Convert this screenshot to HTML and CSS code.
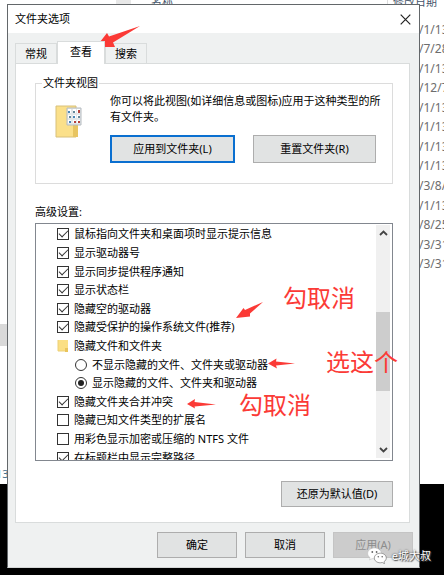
FILE: index.html
```html
<!DOCTYPE html>
<html lang="zh-CN">
<head>
    <meta charset="UTF-8">
    <meta name="viewport" content="width=device-width, initial-scale=1.0">
    <title>文件夹选项</title>
    <link rel="stylesheet" href="styles.css">
</head>
<body>
    <div class="backdrop">
        <div class="explorer">
            <div class="nav-pane">
                <div class="nav-selected"></div>
                <div class="nav-text">13</div>
            </div>
            <div class="file-pane">
                <div class="column-check"></div>
                <div class="column-title">名称</div>
            </div>
            <div class="date-pane">
                <div class="column-title">修改日期</div>
                <div class="dates">
                    <div>/1/13</div>
                    <div>/7/28</div>
                    <div>/1/13</div>
                    <div>/12/7</div>
                    <div>/1/13</div>
                    <div>/1/13</div>
                    <div>/1/13</div>
                    <div>/1/13</div>
                    <div>/3/8/</div>
                    <div>/1/13</div>
                    <div>/8/25</div>
                    <div>/3/31</div>
                    <div>/3/31</div>
                </div>
            </div>
        </div>
        <div class="desktop"></div>
    </div>

    <main class="dialog">
        <header class="titlebar">
            <h1>文件夹选项</h1>
            <button class="close" aria-label="关闭">
                <svg width="11" height="11" viewBox="0 0 11 11"><path d="M.7.7l9.6 9.6M10.3.7L.7 10.3" stroke="#222" stroke-width="1.2" fill="none"/></svg>
            </button>
        </header>
        <div class="content">
            <div class="tabs" role="tablist">
                <button class="tab" role="tab">常规</button>
                <button class="tab active" role="tab" aria-selected="true">查看</button>
                <button class="tab" role="tab">搜索</button>
            </div>
            <div class="panel">
                <fieldset class="views">
                    <legend>文件夹视图</legend>
                    <svg class="views-icon" width="27" height="34" viewBox="0 0 27 34">
                        <path d="M1 1h20v31H1z" fill="#fbe08a" stroke="#d8c07a"/>
                        <path d="M18 20l5-1v13h-5z" fill="#e8c562"/>
                        <path d="M12 3h14v17H12z" fill="#e4e8ea" stroke="#b5bbc0"/>
                        <path d="M13 4h3v4h-3zM18 4h3v4h-3zM22 4h3v4h-3zM13 10h3v3h-3zM18 10h3v3h-3zM22 10h3v3h-3zM13 15h3v3h-3zM18 15h3v3h-3zM22 15h3v3h-3z" fill="#fff"/>
                        <path d="M13 6h2v2h-2zM18 11h2v2h-2zM14 16h2v2h-2z" fill="#4b87b8"/>
                        <path d="M23 5h2v3h-2zM19 16h2v2h-2zM23 16h2v2h-2z" fill="#b5423c"/>
                        <path d="M18 6h2v2h-2zM14 11h2v2h-2zM23 11h2v2h-2z" fill="#66899a"/>
                    </svg>
                    <div class="views-body">
                        <p>你可以将此视图(如详细信息或图标)应用于这种类型的所有文件夹。</p>
                        <div class="views-buttons">
                            <button class="btn focused">应用到文件夹(L)</button>
                            <button class="btn">重置文件夹(R)</button>
                        </div>
                    </div>
                </fieldset>

                <h2>高级设置:</h2>
                <div class="settings">
                    <ul class="options">
                        <li><label><input type="checkbox" checked>鼠标指向文件夹和桌面项时显示提示信息</label></li>
                        <li><label><input type="checkbox" checked>显示驱动器号</label></li>
                        <li><label><input type="checkbox" checked>显示同步提供程序通知</label></li>
                        <li><label><input type="checkbox" checked>显示状态栏</label></li>
                        <li><label><input type="checkbox" checked>隐藏空的驱动器</label></li>
                        <li><label><input type="checkbox" checked>隐藏受保护的操作系统文件(推荐)</label></li>
                        <li class="group">
                            <svg width="12" height="14" viewBox="0 0 12 14"><path d="M1 1h10v11H1z" fill="#fbdf83"/><path d="M8 9h3v4H8z" fill="#e9c45c"/><path d="M1 1v11h7" fill="none" stroke="#ecd078"/></svg>
                            隐藏文件和文件夹
                        </li>
                        <li class="nested"><label><input type="radio" name="hidden">不显示隐藏的文件、文件夹或驱动器</label></li>
                        <li class="nested"><label><input type="radio" name="hidden" checked>显示隐藏的文件、文件夹和驱动器</label></li>
                        <li><label><input type="checkbox" checked>隐藏文件夹合并冲突</label></li>
                        <li><label><input type="checkbox">隐藏已知文件类型的扩展名</label></li>
                        <li><label><input type="checkbox">用彩色显示加密或压缩的 NTFS 文件</label></li>
                        <li><label><input type="checkbox" checked>在标题栏中显示完整路径</label></li>
                    </ul>
                    <div class="scrollbar">
                        <svg width="9" height="6" viewBox="0 0 9 6"><path d="M1 5l3.500-3.500L8 5" stroke="#444" stroke-width="1.8" fill="none"/></svg>
                        <div class="track"><div class="thumb"></div></div>
                        <svg width="9" height="6" viewBox="0 0 9 6"><path d="M1 1l3.500 3.500L8 1" stroke="#444" stroke-width="1.8" fill="none"/></svg>
                    </div>
                </div>
                <button class="btn restore">还原为默认值(D)</button>
            </div>
        </div>
        <footer class="actions">
            <button class="btn">确定</button>
            <button class="btn">取消</button>
            <button class="btn" disabled>应用(A)</button>
        </footer>
    </main>

    <!-- red marks drawn over the dialog -->
    <svg class="arrows" width="444" height="575" viewBox="0 0 444 575">
        <path d="M96 47L107 33l2 3.500L140 26l-27 16.500 2 4.500z"/>
        <path d="M236 318l7.500-10 1.500 2 18-8-13 11.500v3z"/>
        <path d="M268 363.500l8.500-5-.5 3 19 2-19 2 1 3z"/>
        <path d="M187 404l8-5-.5 3 21.500 2.500-21.500 2 .5 2z"/>
    </svg>
    <div class="note note-protected">勾取消</div>
    <div class="note note-hidden">选这个</div>
    <div class="note note-merge">勾取消</div>

    <div class="watermark">
        <svg width="20" height="17" viewBox="0 0 20 17">
            <path d="M7.500 1C3.600 1 .7 3.400.7 6.500c0 1.700.9 3.200 2.400 4.200L2.500 13l2.600-1.400c.8.2 1.500.3 2.400.3 3.900 0 6.900-2.400 6.900-5.400S11.400 1 7.500 1z" fill="#fff" stroke="#bbb" stroke-width=".5"/>
            <path d="M13.300 6.200c-3.400 0-6 2.100-6 4.800s2.600 4.800 6 4.800c.7 0 1.400-.1 2-.3l2.200 1.200-.5-2c1.400-.9 2.300-2.200 2.300-3.700 0-2.700-2.600-4.800-6-4.800z" fill="#fff" stroke="#777" stroke-width=".7"/>
            <g fill="#666"><circle cx="5.300" cy="5" r=".9"/><circle cx="9.600" cy="5" r=".9"/><circle cx="11.300" cy="9.700" r=".8"/><circle cx="15.200" cy="9.700" r=".8"/></g>
        </svg>
        <span>e城大叔</span>
    </div>
</body>
</html>
```
FILE: styles.css
```css
* {
    box-sizing: border-box;
}
body {
    position: relative;
    min-height: 100vh;
    margin: 0;
    padding: 4px 24px 7px 7px;
    overflow: hidden;
    font-family: "Noto Sans", "Noto Sans CJK SC", sans-serif;
    font-size: 11px;
    line-height: 16px;
    color: #000;
}
h1, h2, p, ul {
    margin: 0;
    padding: 0;
    font-size: 11px;
    font-weight: 400;
}
button {
    font: inherit;
    color: inherit;
}

/* window behind the dialog */
.backdrop {
    position: absolute;
    inset: 0;
    display: flex;
    flex-direction: column;
}
.explorer {
    flex: 1;
    display: flex;
    background: #fff;
}
.desktop {
    height: 91px;
    background: #000;
}
.nav-pane {
    width: 116px;
    padding-top: 324px;
}
.nav-selected {
    height: 22px;
    background: #d9d9d9;
}
.nav-text {
    margin-top: 120px;
    margin-left: -4px;
    color: #46708c;
}
.file-pane {
    flex: 1;
    display: flex;
    gap: 20px;
}
.column-check {
    width: 15px;
    height: 6px;
    background: #e8e8e8;
}
.column-title {
    height: 20px;
    margin-top: -6px;
    color: #44546a;
}
.date-pane {
    width: 57px;
    padding-left: 5px;
    border-left: 1px solid #ddd;
    overflow: hidden;
}
.dates {
    display: flex;
    flex-direction: column;
    height: 254px;
    margin-top: 6px;
    padding-left: 26px;
    font-size: 12px;
    color: #6d6d6d;
}
.dates div {
    flex: 1;
    display: flex;
    align-items: center;
}

.dialog {
    position: relative;
    display: flex;
    flex-direction: column;
    border: 1px solid #63676a;
    border-bottom-color: #d5d7d7;
    background: #eff1f1;
}
.titlebar {
    display: flex;
    align-items: center;
    justify-content: space-between;
    height: 28px;
    padding: 0 8px 0 7px;
    background: #fff;
}
.close {
    display: flex;
    padding: 0;
    border: 0;
    background: none;
}

.content {
    padding: 8px 9px 0 7px;
}
.tabs {
    display: flex;
    align-items: flex-end;
}
.tab {
    width: 42px;
    height: 20px;
    padding: 0;
    border: 1px solid #d9dcdc;
    border-bottom: 0;
    border-radius: 0;
    background: #eff1f1;
}
.tab.active {
    width: 48px;
    height: 23px;
    margin-bottom: -1px;
    padding-bottom: 2px;
    background: #fff;
    z-index: 1;
}
.panel {
    display: flex;
    flex-direction: column;
    padding: 11px 16px 15px 19px;
    border: 1px solid #d9dcdc;
    background: #fff;
}

.views {
    display: flex;
    align-items: flex-start;
    gap: 28px;
    min-width: 0;
    margin: 0;
    padding: 2px 16px 20px 19px;
    border: 1px solid #dcdcdc;
}
.views legend {
    margin-left: -13px;
    padding: 0 1px;
}
.views-icon {
    flex: none;
    margin-top: 12px;
}
.views-body {
    flex: 1;
}
.views-body p {
    margin-right: -10px;
}
.views-buttons {
    display: flex;
    gap: 18px;
    margin-top: 10px;
}
.views-buttons .btn {
    flex: 1;
    height: 28px;
}
.btn {
    height: 26px;
    padding: 0;
    border: 1px solid #adadad;
    background: #e1e3e3;
}
.btn.focused {
    border: 2px solid #0a6fd0;
}
.btn:disabled {
    border-color: #c4c4c4;
    background: #cccccc;
    color: #8c8c8c;
}

h2 {
    margin-top: 20px;
}
.settings {
    display: flex;
    height: 238px;
    margin-top: 3px;
    padding: 1px 2px 2px;
    border: 1px solid #82878f;
    overflow: hidden;
}
.options {
    flex: 1;
    display: flex;
    flex-direction: column;
    height: 242px;
    padding-left: 19px;
    list-style: none;
}
.options li, .options label {
    display: flex;
    align-items: center;
    gap: 5px;
}
.options li {
    flex: 1;
    white-space: nowrap;
}
.options .nested {
    padding-left: 18px;
}
.options input {
    appearance: none;
    display: grid;
    place-items: center;
    width: 12px;
    height: 12px;
    margin: 0;
    border: 1px solid #333;
    background: #fff;
}
.options input[type="checkbox"]:checked::before {
    content: "";
    width: 8px;
    height: 4px;
    margin-top: -3px;
    border: solid #333;
    border-width: 0 0 1px 1px;
    transform: rotate(-45deg);
}
.options input[type="radio"] {
    border-radius: 50%;
}
.options input[type="radio"]:checked::before {
    content: "";
    width: 6px;
    height: 6px;
    border-radius: 50%;
    background: #222;
}
.scrollbar {
    display: flex;
    flex-direction: column;
    align-items: center;
    width: 14px;
    padding: 5px 0;
    background: #f0f0f0;
}
.track {
    flex: 1;
    align-self: stretch;
    padding: 76px 0 56px;
}
.thumb {
    height: 100%;
    background: #cdcdcd;
}
.restore {
    align-self: flex-end;
    width: 112px;
    margin-top: 20px;
}

.actions {
    display: flex;
    justify-content: flex-end;
    gap: 8px;
    padding: 9px 6px;
}
.actions .btn {
    width: 80px;
}

.arrows {
    position: absolute;
    top: 0;
    left: 0;
    fill: #fb3a36;
}
.note {
    position: absolute;
    font-size: 24px;
    line-height: 28px;
    color: #fb3a36;
}
.note-protected {
    top: 284px;
    left: 283px;
}
.note-hidden {
    top: 348px;
    left: 326px;
}
.note-merge {
    top: 391px;
    left: 239px;
}
.watermark {
    position: absolute;
    right: 13px;
    bottom: 11px;
    display: flex;
    align-items: center;
    gap: 5px;
    color: #fff;
    text-shadow: 0 0 2px #333, 1px 1px 1px #555;
}
```
